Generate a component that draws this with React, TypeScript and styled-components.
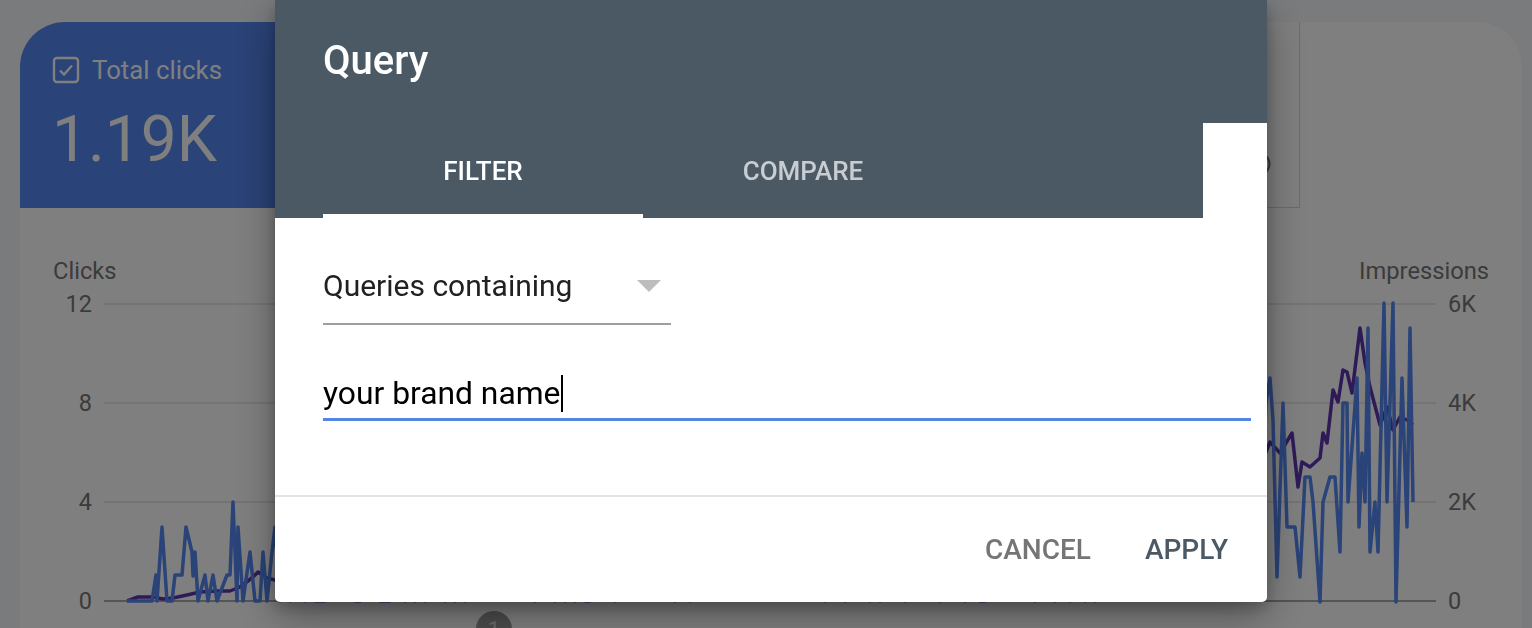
import React from 'react';
import styled, { createGlobalStyle } from 'styled-components';

const GlobalStyle = createGlobalStyle`
  html, body {
    margin: 0;
    padding: 0;
  }
  body {
    background: #f4f6fa;
    font-family: Roboto, "Noto Sans", "Liberation Sans", sans-serif;
    overflow: hidden;
  }
`;

type Tone = 'clicks' | 'impressions' | 'plain';

// only the first tile's text shows; the others sit under the dialog
const TILES: { id: string; label?: string; value?: string; tone: Tone }[] = [
  { id: 'clicks', label: 'Total clicks', value: '1.19K', tone: 'clicks' },
  { id: 'impressions', tone: 'impressions' },
  { id: 'ctr', tone: 'plain' },
  { id: 'position', tone: 'plain' },
];

const LEFT_TICKS = ['12', '8', '4', '0'];
const RIGHT_TICKS = ['6K', '4K', '2K', '0'];

// plot box in page coords: x 104..1436, y 290..615
const OX = 104;
const OY = 290;
const PLOT_W = 1332;
const PLOT_H = 325;
const GRID_Y = [304, 403, 502, 601];

const CLICKS_LEFT: [number, number][] = [
  [127, 601], [152, 601], [156, 575], [157, 601], [162, 527], [167, 601], [172, 601],
  [175, 575], [182, 575], [186, 527], [192, 552], [193, 576], [195, 552], [198, 601],
  [205, 575], [208, 601], [213, 575], [217, 601], [227, 575], [230, 575], [233, 502],
  [237, 601], [238, 527], [243, 601], [250, 552], [255, 601], [260, 601], [263, 552],
  [267, 601], [272, 552], [275, 527],
];

const CLICKS_RIGHT: [number, number][] = [
  [1266, 403], [1270, 378], [1273, 420], [1277, 577], [1283, 403], [1287, 527], [1295, 527],
  [1300, 577], [1305, 477], [1310, 477], [1313, 502], [1320, 602], [1323, 502], [1330, 477],
  [1335, 477], [1340, 552], [1343, 403], [1347, 403], [1348, 502], [1357, 378], [1359, 527],
  [1362, 453], [1365, 502], [1368, 328], [1370, 552], [1375, 502], [1378, 552], [1384, 303],
  [1387, 502], [1393, 303], [1396, 602], [1402, 378], [1407, 527], [1410, 328], [1413, 502],
];

const IMPR_LEFT: [number, number][] = [
  [127, 601], [138, 597], [153, 597], [163, 599], [173, 598], [187, 595], [200, 592],
  [217, 591], [230, 591], [240, 587], [253, 577], [258, 572], [267, 578], [275, 580],
];

const IMPR_RIGHT: [number, number][] = [
  [1266, 452], [1270, 442], [1280, 453], [1292, 433], [1298, 487], [1302, 462], [1310, 467],
  [1320, 458], [1323, 433], [1327, 443], [1333, 390], [1338, 402], [1343, 370], [1347, 372],
  [1352, 393], [1360, 328], [1365, 363], [1370, 387], [1380, 425], [1387, 407], [1393, 430],
  [1400, 417], [1407, 420], [1413, 425],
];

// the middle sits under the dialog; filled with seeded noise
function seeded(seed: number) {
  let s = seed;
  return () => {
    s = (s * 16807) % 2147483647;
    return (s - 1) / 2147483646;
  };
}

function middle() {
  const rnd = seeded(42);
  const clicks: [number, number][] = [];
  const impr: [number, number][] = [];
  for (let x = 280; x < 1264; x += 5) {
    const t = (x - 275) / 992;
    const c = Math.floor(rnd() * (2 + 6 * t));
    clicks.push([x, 601 - c * 24.75]);
    impr.push([x, 580 - t * 128 + (rnd() - 0.5) * 30]);
  }
  return { clicks, impr };
}

const mid = middle();
const toPoints = (pts: [number, number][]) =>
  pts.map(([x, y]) => `${x - OX},${y - OY}`).join(' ');

const clicksLine = toPoints([...CLICKS_LEFT, ...mid.clicks, ...CLICKS_RIGHT]);
const imprLine = toPoints([...IMPR_LEFT, ...mid.impr, ...IMPR_RIGHT]);

const CheckIcon = ({ color }: { color: string }) => (
  <svg width="28" height="28" viewBox="0 0 28 28" fill="none">
    <rect x="2" y="2" width="24" height="24" rx="3" stroke={color} strokeWidth="2.4" />
    <polyline points="8,14.5 12,18.5 20,9.5" stroke={color} strokeWidth="2.4" fill="none" />
  </svg>
);

const HelpIcon = ({ color }: { color: string }) => (
  <svg width="24" height="24" viewBox="0 0 24 24" fill="none">
    <circle cx="12" cy="12" r="10.5" stroke={color} strokeWidth="2" />
    <path d="M9.2 9.3a2.9 2.9 0 0 1 5.6 1c0 1.9-2.8 2.4-2.8 4" stroke={color} strokeWidth="2" />
    <circle cx="12" cy="17.6" r="1.1" fill={color} />
  </svg>
);

export default function App() {
  return (
    <>
      <GlobalStyle />
      <Page>
        <Card>
          <TileRow>
            {TILES.map((t) => {
              const ink = t.tone === 'plain' ? '#5f6368' : '#ffffff';
              return (
                <Tile key={t.id} $tone={t.tone}>
                  {t.label && (
                    <TileHead>
                      <CheckIcon color={ink} />
                      <span>{t.label}</span>
                    </TileHead>
                  )}
                  {t.value && <TileValue>{t.value}</TileValue>}
                  <TileFoot>
                    <HelpIcon color={t.tone === 'plain' ? '#757575' : 'rgba(255,255,255,0.8)'} />
                  </TileFoot>
                </Tile>
              );
            })}
          </TileRow>

          <ChartSection>
            <AxisTitles>
              <span>Clicks</span>
              <span>Impressions</span>
            </AxisTitles>
            <ChartGrid>
              <AxisColumn $side="left">
                {LEFT_TICKS.map((v) => (
                  <Tick key={v}>{v}</Tick>
                ))}
              </AxisColumn>
              <PlotWrap>
                <svg width={PLOT_W} height={PLOT_H} viewBox={`0 0 ${PLOT_W} ${PLOT_H}`}>
                  {GRID_Y.map((y, i) => (
                    <line
                      key={y}
                      x1={0}
                      x2={PLOT_W}
                      y1={y - OY}
                      y2={y - OY}
                      stroke={i === GRID_Y.length - 1 ? '#a8a8a8' : '#e2e2e2'}
                      strokeWidth={i === GRID_Y.length - 1 ? 2 : 1.5}
                    />
                  ))}
                  <polyline
                    points={imprLine}
                    fill="none"
                    stroke="#5e35b1"
                    strokeWidth="3.5"
                    strokeLinejoin="round"
                  />
                  <polyline
                    points={clicksLine}
                    fill="none"
                    stroke="#5486f0"
                    strokeWidth="3.5"
                    strokeLinejoin="round"
                  />
                </svg>
                <Marker>1</Marker>
              </PlotWrap>
              <AxisColumn $side="right">
                {RIGHT_TICKS.map((v) => (
                  <Tick key={v}>{v}</Tick>
                ))}
              </AxisColumn>
            </ChartGrid>
          </ChartSection>
        </Card>
      </Page>

      <Scrim>
        <Dialog>
          <DialogHeader>
            <DialogTitle>Query</DialogTitle>
          </DialogHeader>
          <TabStrip>
            <TabBar>
              <Tab $active>FILTER</Tab>
              <Tab>COMPARE</Tab>
            </TabBar>
          </TabStrip>
          <DialogBody>
            <Select>
              <span>Queries containing</span>
              <Caret />
            </Select>
            <TextField>
              your brand name
              <Cursor />
            </TextField>
          </DialogBody>
          <DialogFooter>
            <FlatButton $primary={false}>CANCEL</FlatButton>
            <FlatButton $primary>APPLY</FlatButton>
          </DialogFooter>
        </Dialog>
      </Scrim>
    </>
  );
}

const Page = styled.div`
  padding: 22px 10px 0 20px;
  height: 628px;
  box-sizing: border-box;
`;

const Card = styled.div`
  background: #ffffff;
  border-radius: 45px 45px 0 0;
  overflow: hidden;
  height: 100%;
`;

const TileRow = styled.div`
  display: flex;
  height: 186px;
`;

const Tile = styled.div<{ $tone: Tone }>`
  flex: 0 0 320px;
  box-sizing: border-box;
  display: flex;
  flex-direction: column;
  padding: 34px 28px 31px 32px;
  background: ${(p) =>
    p.$tone === 'clicks' ? '#5486f0' : p.$tone === 'impressions' ? '#5e35b1' : '#ffffff'};
  color: ${(p) => (p.$tone === 'plain' ? '#5f6368' : '#ffffff')};
  border: ${(p) => (p.$tone === 'plain' ? '1px solid #d6d6d6' : 'none')};
  border-top: none;
`;

const TileHead = styled.div`
  display: flex;
  align-items: center;
  gap: 12px;
  height: 28px;
  font-size: 25.8px;
`;

const TileValue = styled.div`
  margin-top: 23px;
  font-size: 64px;
  line-height: 66px;
  font-weight: 400;
`;

const TileFoot = styled.div`
  margin-top: auto;
  display: flex;
  justify-content: flex-end;
`;

const ChartSection = styled.div`
  padding-top: 49px;
`;

const AxisTitles = styled.div`
  display: flex;
  justify-content: space-between;
  padding: 0 33px;
  font-size: 23.7px;
  line-height: 28px;
  color: #777777;
`;

const ChartGrid = styled.div`
  margin-top: 5px;
  display: grid;
  grid-template-columns: 84px ${PLOT_W}px 1fr;
  height: ${PLOT_H}px;
`;

const AxisColumn = styled.div<{ $side: 'left' | 'right' }>`
  display: flex;
  flex-direction: column;
  justify-content: space-between;
  align-items: ${(p) => (p.$side === 'left' ? 'flex-end' : 'flex-start')};
  padding: ${(p) => (p.$side === 'left' ? '0 12px 0 0' : '0 0 0 12px')};
  font-size: 23.5px;
  color: #777777;
`;

const Tick = styled.span`
  line-height: 28px;
`;

const PlotWrap = styled.div`
  position: relative;
  svg {
    display: block;
  }
`;

const Marker = styled.div`
  position: absolute;
  left: 372px;
  top: 321px;
  width: 36px;
  height: 36px;
  border-radius: 50%;
  background: #9a9a9a;
  color: #dcdcdc;
  font-size: 22px;
  display: flex;
  align-items: center;
  justify-content: center;
`;

const Scrim = styled.div`
  position: fixed;
  inset: 0;
  background: rgba(0, 0, 0, 0.5);
  display: flex;
  align-items: flex-start;
`;

const Dialog = styled.div`
  margin-left: 275px;
  width: 992px;
  height: 602px;
  background: #ffffff;
  border-radius: 0 0 5px 5px;
  overflow: hidden;
  display: flex;
  flex-direction: column;
  box-shadow: 0 14px 40px rgba(0, 0, 0, 0.35), 0 6px 14px rgba(0, 0, 0, 0.2);
`;

const DialogHeader = styled.div`
  height: 123px;
  box-sizing: border-box;
  background: #4a5964;
  padding: 37px 48px 0;
`;

const DialogTitle = styled.h2`
  margin: 0;
  font-size: 40px;
  line-height: 48px;
  font-weight: 500;
  color: #ffffff;
`;

const TabStrip = styled.div`
  display: flex;
  height: 95px;
`;

const TabBar = styled.div`
  flex: 0 0 928px;
  box-sizing: border-box;
  background: #4a5964;
  padding-left: 48px;
  display: flex;
`;

const Tab = styled.div<{ $active?: boolean }>`
  width: 320px;
  box-sizing: border-box;
  padding-top: 4px;
  border-bottom: 4px solid ${(p) => (p.$active ? '#ffffff' : 'transparent')};
  display: flex;
  align-items: center;
  justify-content: center;
  font-size: 26px;
  font-weight: 500;
  color: ${(p) => (p.$active ? '#ffffff' : 'rgba(255, 255, 255, 0.7)')};
`;

const DialogBody = styled.div`
  padding: 49px 16px 74px 48px;
`;

const Select = styled.div`
  width: 348px;
  box-sizing: border-box;
  display: flex;
  align-items: center;
  justify-content: space-between;
  padding: 0 10px 18px 0;
  line-height: 38px;
  font-size: 30px;
  color: #212121;
  border-bottom: 2px solid #9e9e9e;
`;

const Caret = styled.span`
  width: 0;
  height: 0;
  border-left: 12px solid transparent;
  border-right: 12px solid transparent;
  border-top: 12px solid #bdbdbd;
`;

const TextField = styled.div`
  margin-top: 48px;
  display: flex;
  align-items: center;
  height: 40px;
  padding-bottom: 5px;
  font-size: 31.8px;
  color: #000000;
  border-bottom: 3px solid #5186e6;
`;

const Cursor = styled.span`
  display: inline-block;
  width: 2px;
  height: 37px;
  margin-left: 1px;
  background: #000000;
`;

const DialogFooter = styled.div`
  flex: 1;
  border-top: 2px solid #e3e3e3;
  display: flex;
  align-items: center;
  justify-content: flex-end;
  gap: 54px;
  padding-right: 39px;
`;

const FlatButton = styled.div<{ $primary: boolean }>`
  font-size: 28px;
  font-weight: 500;
  color: ${(p) => (p.$primary ? '#4a5964' : '#757575')};
`;
